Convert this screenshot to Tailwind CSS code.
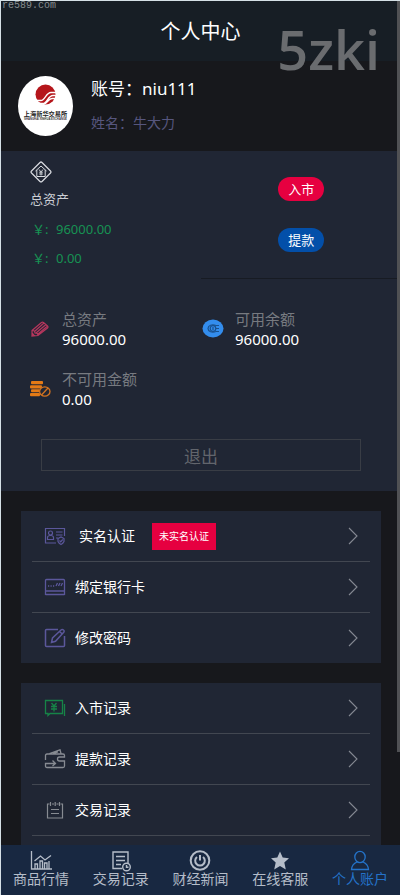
<!DOCTYPE html>
<html lang="zh-CN">
<head>
<meta charset="utf-8">
<meta name="viewport" content="width=device-width, initial-scale=1">
<title>个人中心</title>
<script src="https://cdn.jsdelivr.net/npm/@tailwindcss/browser@4"></script>
</head>
<body class="bg-[#17181c] font-['Noto_Sans','Noto_Sans_CJK_SC',sans-serif] text-white">
<div class="relative flex h-screen flex-col overflow-hidden border-t border-l border-[#d5e0e6]">
  <span class="absolute top-0 left-px font-['Liberation_Mono',monospace] text-[10px] leading-[10px] text-[#858b8e]">re589.com</span>
  <span class="absolute top-3 right-5 font-['Open_Sans',sans-serif] text-[54px] leading-[72px] font-semibold text-[#6a6c6f]">5zki</span>
  <div class="absolute top-0 right-0 h-[84%] w-[3px] bg-[#505154]"></div>

  <main class="min-h-0 flex-1 overflow-hidden">
    <header class="flex h-15 items-center justify-center bg-[#171e25] pt-[2px]">
      <h1 class="text-[20px] leading-7">个人中心</h1>
    </header>

    <section class="flex h-[90px] items-center gap-[18px] px-[17px]">
      <svg class="h-[60px] w-[55px]" viewBox="0 0 55 60" role="img" aria-label="上海新华交易所">
        <ellipse cx="27.5" cy="30" rx="27.5" ry="30" fill="#fff"/>
        <circle cx="27.500" cy="18.500" r="10" fill="#b5161b"/>
        <path d="M17 24.500h6c4 0 5-8 10-8h5M19 27.500h6c4 0 5-8 10-8h3M25 28.500c4 0 5-6 9-6h4" fill="none" stroke="#fff" stroke-width="1.300"/>
        <text x="27.500" y="40" text-anchor="middle" font-size="6.200" font-weight="700" fill="#222" font-family="Noto Sans CJK SC">上海新华交易所</text>
        <text x="27.500" y="44" text-anchor="middle" font-size="2.800" font-weight="700" fill="#333" font-family="Liberation Sans">SHANGHAI XINHUA EXCHANGE</text>
      </svg>
      <div class="flex flex-col gap-2 pb-[2px]">
        <p class="text-[17px] leading-6">账号：niu111</p>
        <p class="pt-1 text-[14px] leading-5 text-[#56567e]">姓名：牛大力</p>
      </div>
    </section>

    <section class="bg-[#202634] pb-5">
      <div class="grid grid-cols-2">
        <div class="flex h-32 flex-col pt-[10px] pl-[29px]">
          <svg class="size-[22px]" viewBox="0 0 22 22" fill="none" stroke="#d8dbe0" stroke-width="1.200"><path d="M10 1.500q1-1 2 0l8.500 8.500q1 1 0 2l-8.500 8.500q-1 1-2 0L1.500 12q-1-1 0-2z"/><path d="M5.500 10 11 5l5.500 5M6.800 9v6.500h8.400V9" stroke-width="1"/><path d="m9 8.500 2 2.500 2-2.500M11 11v3.500M9.200 11.200h3.600M9.200 13h3.600" stroke-width=".9"/></svg>
          <p class="pt-1 text-[13px] leading-6 text-[#cbced4]">总资产</p>
          <p class="pt-1 pl-[2px] text-[13px] leading-[29px] text-[#179253]"><span class="inline-block w-6">￥:</span>96000.00</p>
          <p class="pl-[2px] text-[13px] leading-[29px] text-[#179253]"><span class="inline-block w-6">￥:</span>0.00</p>
        </div>
        <div class="flex h-32 flex-col items-center gap-[27px] border-b border-[#171b23] pt-[26px] pl-[2px]">
          <button class="h-6 w-[46px] rounded-full bg-[#e60040] text-[13px] leading-6">入市</button>
          <button class="h-6 w-[46px] rounded-full bg-[#034fa9] text-[13px] leading-6">提款</button>
        </div>
      </div>

      <dl class="grid grid-cols-[173px_1fr] gap-y-5 pt-[30px] pb-px pl-7">
        <div class="flex items-center gap-[11px]">
          <svg class="h-[22px] w-[22px] shrink-0" viewBox="0 0 22 22" fill="none" stroke="#b5365d" stroke-width="1.200"><path d="m3 12.500 9.500-8q1-.8 2 0l4 3.500q1 1 0 2L9 17.500l-6 .5zM3 12.500l2.500.5.500 2 2.500.5.500 2M6 13l9-8M7 15l10-8.500M9 16l9-7.500M3 17.500l2-.2-1.500-2z"/></svg>
          <div><dt class="text-[15px] leading-5 text-[#777a80]">总资产</dt><dd class="text-[15px] leading-5">96000.00</dd></div>
        </div>
        <div class="flex items-center gap-[11px]">
          <svg class="h-[22px] w-[22px] shrink-0" viewBox="0 0 22 22" fill="none" stroke="#19518e" stroke-width="1.200"><ellipse cx="11" cy="10.500" rx="10.500" ry="9" fill="#338ded" stroke="none"/><path d="M14 7.500c-4-1.500-8 0-8 3s4 4.500 8 3M14 7.500h3M14 10.500h3M14 13.500h3"/><circle cx="11" cy="10.500" r="2.800"/><path d="M11 9v3"/></svg>
          <div><dt class="text-[15px] leading-5 text-[#777a80]">可用余额</dt><dd class="text-[15px] leading-5">96000.00</dd></div>
        </div>
        <div class="flex items-center gap-[11px]">
          <svg class="h-[22px] w-[22px] shrink-0" viewBox="0 0 22 22"><g fill="#e37a16"><rect x="2" y="3" width="12" height="3.300" rx="1"/><rect x="1" y="7.200" width="12" height="3.300" rx="1"/><rect x="2" y="11.300" width="9" height="3" rx="1"/><rect x="1" y="15" width="10" height="3.300" rx="1"/></g><ellipse cx="15.800" cy="13.500" rx="5.200" ry="4.700" fill="#202634" stroke="#d47420" stroke-width="1.300"/><path d="m12.500 17 6.500-7" stroke="#d47420" stroke-width="1.300"/></svg>
          <div><dt class="text-[15px] leading-5 text-[#777a80]">不可用金额</dt><dd class="text-[15px] leading-5">0.00</dd></div>
        </div>
      </dl>
      <div class="pt-[29px] pr-[39px] pl-10">
        <button class="block h-8 w-full border border-[#393d45] pt-1 text-[17px] leading-[26px] text-[#62656c]">退出</button>
      </div>
    </section>

    <nav class="mt-5 mr-[19px] ml-5 bg-[#202634] px-[11px]" aria-label="账户设置">
      <a href="#" class="flex h-[51px] items-center border-b border-[#424751] pr-3 pl-3">
        <svg class="h-5 w-[22px]" viewBox="0 0 22 20" fill="none" stroke="#5b579b" stroke-width="1.200"><path d="M12 17H1.500V2.500h19V10"/><circle cx="6.500" cy="7" r="2"/><path d="M3.500 13.500v-2q0-2 3-2t3 2v2zM12 6h6.500M12 9h6.500M12 12h2M14 12.500l3-1.500 3 1.500v3q-1 2-3 3-2-1-3-3zM15.500 14.500l1.200 1.300 2-2.300"/></svg>
        <span class="pl-[13px] text-[14px] leading-5">实名认证</span>
        <span class="ml-[17px] bg-[#e60040] px-[7px] text-[10px] leading-[27px]">未实名认证</span>
        <svg class="ml-auto h-[18px] w-[10px]" viewBox="0 0 10 18" fill="none" stroke="#858992" stroke-width="1.100"><path d="m1 1 8 8-8 8"/></svg>
      </a>
      <a href="#" class="flex h-[51px] items-center border-b border-[#424751] pr-3 pl-3">
        <svg class="h-5 w-[22px]" viewBox="0 0 22 20" fill="none" stroke="#5b579b" stroke-width="1.300"><path d="M1.500 18v-14.500q0-1 1-1h17q1 0 1 1V18M1.500 14h19M1.500 17.500h19M4 9h1.200M6.500 9h1.200M9 9h1.200M12 9l1.500-3M14.500 9l1.500-3M17 9l1.500-3"/></svg>
        <span class="pl-[9px] text-[14px] leading-5">绑定银行卡</span>
        <svg class="ml-auto h-[18px] w-[10px]" viewBox="0 0 10 18" fill="none" stroke="#858992" stroke-width="1.100"><path d="m1 1 8 8-8 8"/></svg>
      </a>
      <a href="#" class="flex h-[50px] items-center pr-3 pl-3">
        <svg class="h-5 w-[22px]" viewBox="0 0 22 20" fill="none" stroke="#5b579b" stroke-width="1.500"><path d="M14 1.500H2.500q-1 0-1 1v15q0 1 1 1h17q1 0 1-1V8M7.500 14.500l1-4.500L17 2q1.200-1 2.500 0t0 2.500L11.500 13.300zM15.500 3.500l2.500 2.300"/></svg>
        <span class="pl-[9px] text-[14px] leading-5">修改密码</span>
        <svg class="ml-auto h-[18px] w-[10px]" viewBox="0 0 10 18" fill="none" stroke="#858992" stroke-width="1.100"><path d="m1 1 8 8-8 8"/></svg>
      </a>
    </nav>

    <nav class="mt-5 mr-[19px] ml-5 bg-[#202634] px-[11px] pb-10" aria-label="记录">
      <a href="#" class="flex h-[51px] items-center border-b border-[#424751] pr-3 pl-3">
        <svg class="h-5 w-[22px]" viewBox="0 0 22 20" fill="none" stroke="#168447" stroke-width="1.300"><path d="M1.500 2.500h17v13H6l-2 2v-2H1.500zM20.500 6v12M7.500 5 10 8l2.500-3M10 8v5.500M7 8.500h6M7 11h6"/></svg>
        <span class="pl-[9px] text-[14px] leading-5">入市记录</span>
        <svg class="ml-auto h-[18px] w-[10px]" viewBox="0 0 10 18" fill="none" stroke="#858992" stroke-width="1.100"><path d="m1 1 8 8-8 8"/></svg>
      </a>
      <a href="#" class="flex h-[51px] items-center border-b border-[#424751] pr-3 pl-3">
        <svg class="h-5 w-[22px]" viewBox="0 0 22 20" fill="none" stroke="#878b92" stroke-width="1.300"><path d="M1.500 11V6.500q0-1.500 1.500-1.500h16q1.500 0 1.500 1.500V8h-5q-2 0-2 2t2 2h5v5q0 1.500-1.500 1.500H3q-1.500 0-1.500-1.500v-2.500h9M8.500 11.500l3 3-3 2.500M5.500 4.500 16 .8l1 3.700M9 4.500l5-1.600"/></svg>
        <span class="pl-[9px] text-[14px] leading-5">提款记录</span>
        <svg class="ml-auto h-[18px] w-[10px]" viewBox="0 0 10 18" fill="none" stroke="#858992" stroke-width="1.100"><path d="m1 1 8 8-8 8"/></svg>
      </a>
      <a href="#" class="flex h-[51px] items-center border-b border-[#424751] pr-3 pl-3">
        <svg class="h-5 w-[22px]" viewBox="0 0 22 20" fill="none" stroke="#878b92" stroke-width="1.200"><path d="M5.500 4H3.500v14h15V4h-2M8 4h2M12.500 4h2M6.500 2v4M11.200 2v4M15.500 2v4M7 9.500h8M7 13.500h8"/></svg>
        <span class="pl-[9px] text-[14px] leading-5">交易记录</span>
        <svg class="ml-auto h-[18px] w-[10px]" viewBox="0 0 10 18" fill="none" stroke="#858992" stroke-width="1.100"><path d="m1 1 8 8-8 8"/></svg>
      </a>
    </nav>
  </main>

  <nav class="grid h-[50px] shrink-0 grid-cols-5 bg-[#182841] text-[14px] leading-[14px] text-[#b5bdc9]" aria-label="主导航">
    <a href="#" class="flex flex-col items-center pt-[5px]">
      <svg class="size-[22px]" viewBox="0 0 22 22" fill="none" stroke="currentColor" stroke-width="1.300"><path d="M1.500 1v18H22M4.500 11l6-5 4.500 4 6-4.500M5 19v-5h2.500v5M10 19v-8h2.500v8M14.500 19v-6H17v6M19 19v-8"/></svg>
      <span>商品行情</span>
    </a>
    <a href="#" class="flex flex-col items-center pt-[5px]">
      <svg class="size-[22px]" viewBox="0 0 22 22" fill="none" stroke="currentColor" stroke-width="1.400"><path d="M12 18.500H3V2h15v11.500M6 6.500h9M6 10.500h9M6 14.500h5"/><circle cx="16.500" cy="17" r="3.800"/><path d="M16.500 15v2.200h2"/></svg>
      <span>交易记录</span>
    </a>
    <a href="#" class="flex flex-col items-center pt-[5px]">
      <svg class="size-[22px]" viewBox="0 0 22 22" fill="none" stroke="currentColor" stroke-width="2"><circle cx="11" cy="10.500" r="9.300"/><path d="M8 7a4.800 4.800 0 1 0 6 0M11 5v5.500"/></svg>
      <span>财经新闻</span>
    </a>
    <a href="#" class="flex flex-col items-center pt-[5px]">
      <svg class="size-[22px]" viewBox="0 0 22 22" fill="currentColor"><path d="m11 1.500 2.700 6 6.300.7-4.700 4.300 1.500 7L11 16l-5.800 3.500 1.500-7L2 8.200l6.300-.7z"/></svg>
      <span>在线客服</span>
    </a>
    <a href="#" class="flex flex-col items-center pt-[5px] text-[#2473c9]" aria-current="page">
      <svg class="size-[22px]" viewBox="0 0 22 22" fill="none" stroke="currentColor" stroke-width="1.300"><ellipse cx="11" cy="7" rx="5.200" ry="5.700"/><path d="M8 12q-5 2-5.500 7.500h17Q19 14 14 12"/></svg>
      <span>个人账户</span>
    </a>
  </nav>
</div>
</body>
</html>
